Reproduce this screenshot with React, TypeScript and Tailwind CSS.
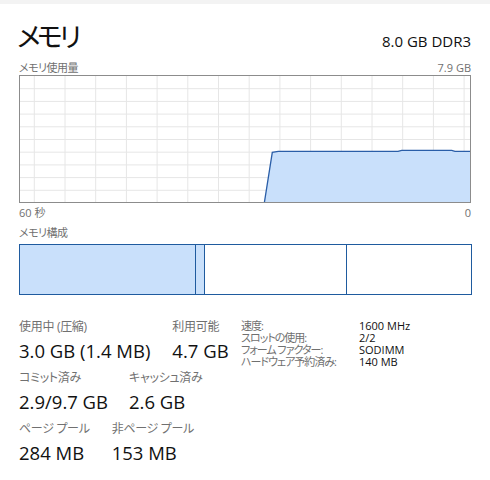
const vLines = Array.from({ length: 15 }, (_, i) => 14.3 + i * 30.7);
const hLines = Array.from({ length: 9 }, (_, i) => 12.7 * (i + 1));

const curve: [number, number][] = [
  [244.3, 127],
  [252.3, 76.3],
  [258.3, 75.3],
  [378, 75.3],
  [381.7, 74.3],
  [431.7, 74.3],
  [435, 75.3],
  [451, 75.3],
];

function UsageGraph() {
  const line = curve.map(([x, y]) => `${x},${y}`).join(" ");
  const area = `${line} 451,127`;
  return (
    <div className="h-[128px] w-full border border-[#8c8c8c]">
      <svg width="450" height="126" viewBox="0 0 450 126" className="block">
        {vLines.map((x) => (
          <line key={x} x1={x} x2={x} y1={0} y2={126} stroke="#e6e6e6" strokeWidth={1} />
        ))}
        {hLines.map((y) => (
          <line key={y} x1={0} x2={450} y1={y} y2={y} stroke="#e6e6e6" strokeWidth={1} />
        ))}
        <polygon points={area} fill="#c9e0fb" />
        <polyline points={line} fill="none" stroke="#2a5ea8" strokeWidth={1.3} />
      </svg>
    </div>
  );
}

function Stat({ label, value }: { label: string; value: string }) {
  return (
    <div className="flex flex-col">
      <span className="h-4 text-[12px] leading-4 tracking-[-0.3px] text-[#707070]">{label}</span>
      <span className="mt-1 h-6 text-[18.5px] leading-6 text-[#111]">{value}</span>
    </div>
  );
}

const specs = [
  ["速度:", "1600 MHz"],
  ["スロットの使用:", "2/2"],
  ["フォーム ファクター:", "SODIMM"],
  ["ハードウェア予約済み:", "140 MB"],
];

export default function App() {
  return (
    <div className="h-[480px] w-[490px] overflow-hidden bg-white font-['Open_Sans','Noto_Sans_CJK_JP',sans-serif] [font-feature-settings:'palt']">
      <div className="h-1 bg-[#f3f3f3]" />
      <div className="px-[19px]">
        <div className="mt-[16px] flex items-baseline justify-between">
          <h1 className="-ml-[2px] text-[27px] leading-[34px] tracking-[-3.5px] text-[#111]">メモリ</h1>
          <span className="text-[15px] text-[#111]">8.0 GB DDR3</span>
        </div>
        <div className="mt-[6px] flex h-[15px] items-center justify-between text-[11px] leading-[15px] text-[#707070]">
          <span className="tracking-[-0.5px]">メモリ使用量</span>
          <span>7.9 GB</span>
        </div>
        <UsageGraph />
        <div className="mt-[3px] flex h-[14px] items-center justify-between text-[11px] leading-[14px] text-[#707070]">
          <span>60 秒</span>
          <span>0</span>
        </div>
        <div className="mt-[5px] h-[15px] text-[11px] leading-[15px] tracking-[-0.5px] text-[#707070]">メモリ構成</div>
        <div className="mt-[4px] flex h-[51px] w-[453px] border border-[#1f5b9f]">
          <div className="w-[175px] bg-[#c9e0fb]" />
          <div className="w-[10px] border-x border-[#1f5b9f] bg-[#c9e0fb]" />
          <div className="w-[142px] border-r border-[#1f5b9f]" />
          <div className="flex-1" />
        </div>
        <div className="mt-[24px] flex items-start">
          <div className="flex w-[222px] flex-col gap-[7px]">
            <div className="flex gap-[22px]">
              <Stat label="使用中 (圧縮)" value="3.0 GB (1.4 MB)" />
              <Stat label="利用可能" value="4.7 GB" />
            </div>
            <div className="flex gap-[21px]">
              <Stat label="コミット済み" value="2.9/9.7 GB" />
              <Stat label="キャッシュ済み" value="2.6 GB" />
            </div>
            <div className="flex gap-[22px]">
              <Stat label="ページ プール" value="284 MB" />
              <Stat label="非ページ プール" value="153 MB" />
            </div>
          </div>
          <div className="mt-[1px] grid grid-cols-[118px_auto] text-[11px] leading-[12px]">
            {specs.map(([k, v]) => (
              <div key={k} className="contents">
                <span className="whitespace-nowrap tracking-[-1px] text-[#707070]">{k}</span>
                <span className="text-[#111]">{v}</span>
              </div>
            ))}
          </div>
        </div>
      </div>
    </div>
  );
}
